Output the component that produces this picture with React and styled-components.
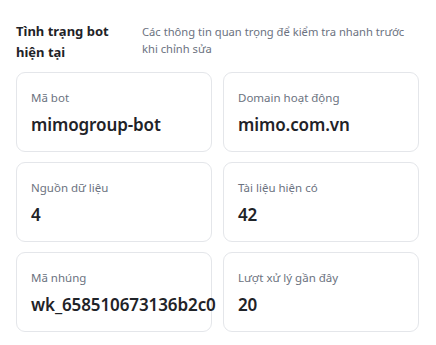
import React from 'react';
import styled, { createGlobalStyle } from 'styled-components';

const GlobalStyle = createGlobalStyle`
  body {
    margin: 0;
    background: #ffffff;
    font-family: "Noto Sans", "Liberation Sans", sans-serif;
  }
`;

const Page = styled.div`
  width: 403px;
  padding: 21px 0 0 16px;
`;

const Header = styled.div`
  display: flex;
  align-items: flex-start;
  gap: 16px;
  margin-bottom: 9px;
`;

const Title = styled.h2`
  margin: 0;
  width: 110px;
  flex-shrink: 0;
  font-size: 13px;
  line-height: 21px;
  font-weight: 700;
  color: #1f2328;
`;

const Description = styled.p`
  margin: 2px 0 0;
  font-size: 11.2px;
  line-height: 17px;
  color: #6b7280;
`;

const Grid = styled.div`
  display: grid;
  grid-template-columns: 196px 196px;
  grid-auto-rows: 80px;
  column-gap: 11px;
  row-gap: 10px;
`;

const Card = styled.div`
  box-sizing: border-box;
  border: 1px solid #e4e6ea;
  border-radius: 9px;
  padding: 17px 14px 0;
  background: #fff;
`;

const Label = styled.div`
  font-size: 11.5px;
  line-height: 16px;
  color: #6b7280;
`;

const Value = styled.div`
  margin-top: 7px;
  font-size: 17px;
  line-height: 24px;
  font-weight: 600;
  letter-spacing: -0.1px;
  color: #1f2328;
  white-space: nowrap;
`;

const stats = [
  { label: 'Mã bot', value: 'mimogroup-bot' },
  { label: 'Domain hoạt động', value: 'mimo.com.vn' },
  { label: 'Nguồn dữ liệu', value: '4' },
  { label: 'Tài liệu hiện có', value: '42' },
  { label: 'Mã nhúng', value: 'wk_658510673136b2c0' },
  { label: 'Lượt xử lý gần đây', value: '20' },
];

const App = () => {
  return (
    <Page>
      <GlobalStyle />
      <Header>
        <Title>Tình trạng bot hiện tại</Title>
        <Description>Các thông tin quan trọng để kiểm tra nhanh trước khi chỉnh sửa</Description>
      </Header>
      <Grid>
        {stats.map((s) => (
          <Card key={s.label}>
            <Label>{s.label}</Label>
            <Value>{s.value}</Value>
          </Card>
        ))}
      </Grid>
    </Page>
  );
};

export default App;
